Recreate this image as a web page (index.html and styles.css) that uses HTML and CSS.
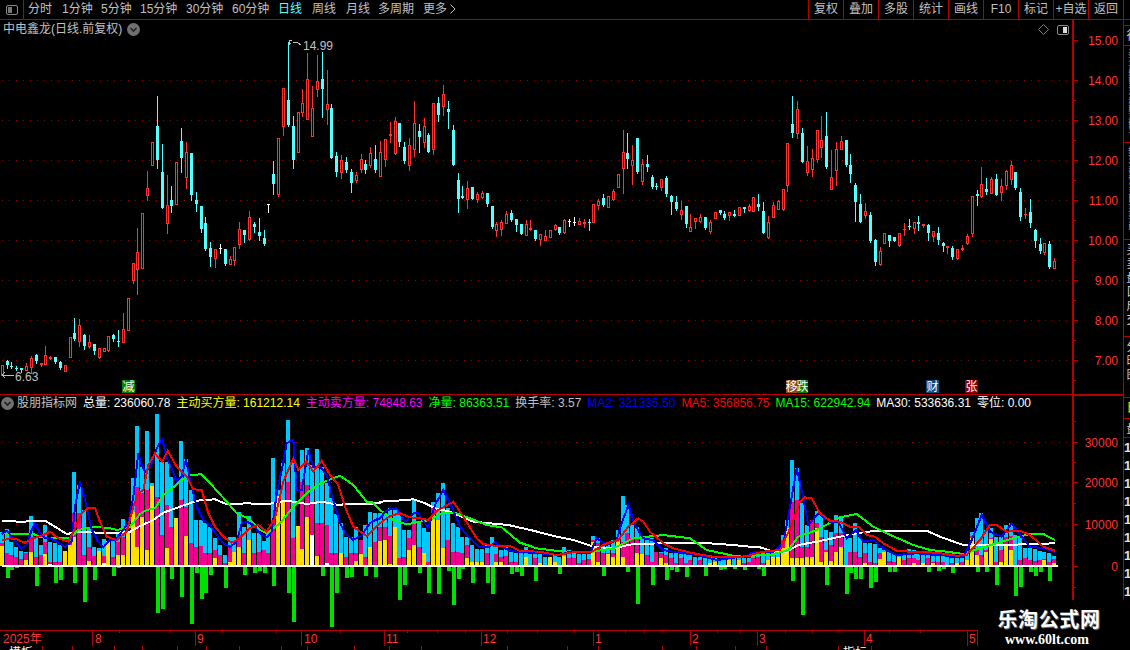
FILE: index.html
```html
<!DOCTYPE html>
<html lang="zh-CN">
<head>
  <meta charset="UTF-8" />
  <title>中电鑫龙 日线</title>
  <link rel="stylesheet" href="styles.css">
</head>
<body>

  <!-- top toolbar -->
  <div class="toolbar">
    <div class="tb-toggle"><span class="toggle toggle-left"><i></i></span></div>
    <span class="nav-item w34">分时</span>
    <span class="nav-item w39">1分钟</span>
    <span class="nav-item w39">5分钟</span>
    <span class="nav-item w46">15分钟</span>
    <span class="nav-item w46">30分钟</span>
    <span class="nav-item w46">60分钟</span>
    <span class="nav-item w34 active">日线</span>
    <span class="nav-item w34">周线</span>
    <span class="nav-item w33">月线</span>
    <span class="nav-item w45">多周期</span>
    <span class="nav-item w45">更多 <svg class="more-arrow" width="6" height="10" viewBox="0 0 6 10"><path d="M0.5 0.5L5 5L0.5 9.5" /></svg></span>
    <div class="tb-right">
      <span class="tb-cell">复权</span>
      <span class="tb-cell">叠加</span>
      <span class="tb-cell">多股</span>
      <span class="tb-cell">统计</span>
      <span class="tb-cell">画线</span>
      <span class="tb-cell">F10</span>
      <span class="tb-cell">标记</span>
      <span class="tb-cell">+自选</span>
      <span class="tb-cell">返回</span>
      <span class="tb-cell tb-last"></span>
    </div>
  </div>

  <div class="stage">
    <div class="plots">

      <!-- price panel -->
      <div class="panel">
        <svg id="priceChart" class="chart" width="1123" height="376" viewBox="0 20 1123 376"></svg>
        <div class="panel-title">
          <span>中电鑫龙(日线.前复权)</span>
          <svg class="chev" width="13" height="13" viewBox="0 0 13 13"><circle cx="6.5" cy="6.5" r="6.5" /><path d="M3.5 5L6.5 8L9.5 5" /></svg>
        </div>
        <div class="panel-tools">
          <svg class="diamond" width="11" height="11" viewBox="0 0 11 11"><path d="M5.5 0.5L10.5 5.5L5.5 10.5L0.5 5.5Z" /></svg>
          <span class="toggle toggle-right"><i></i></span>
        </div>
      </div>

      <!-- volume panel -->
      <div class="panel">
        <svg id="volChart" class="chart" width="1123" height="250" viewBox="0 396 1123 250"></svg>
        <div class="legend">
          <svg class="chev" width="13" height="13" viewBox="0 0 13 13"><circle cx="6.5" cy="6.5" r="6.5" /><path d="M3.5 5L6.5 8L9.5 5" /></svg>
          <span class="lg-name">股朋指标网</span>
          <span class="lg-white">总量: 236060.78</span>
          <span class="lg-yellow">主动买方量: 161212.14</span>
          <span class="lg-magenta">主动卖方量: 74848.63</span>
          <span class="lg-green">净量: 86363.51</span>
          <span class="lg-name">换手率: 3.57</span>
          <span class="lg-blue">MA2: 321335.50</span>
          <span class="lg-red">MA5: 356856.75</span>
          <span class="lg-green">MA15: 622942.94</span>
          <span class="lg-white">MA30: 533636.31</span>
          <span class="lg-white">零位: 0.00</span>
        </div>
      </div>

      <!-- bottom tabs, mostly cut off by the window. cells come from chart.js -->
      <div id="statusbar" class="statusbar"></div>
    </div>

    <!-- right side tabs, only their left edge is on screen -->
    <div class="side">
      <div class="side-tab h6"></div>
      <div class="side-tab h20"><span>行情</span></div>
      <div class="side-tab h97 small"><span>基本资料财务分析股东研究</span></div>
      <div class="side-tab h97 small"><span>经营分析行业对比资金流向</span></div>
      <div class="side-tab h97"><span>买卖盘口成交</span></div>
      <div class="side-tab h61"><span>分时图</span></div>
      <div class="side-tab h21 side-yellow"><span>日</span></div>
      <div class="side-tab h19"><span>盘</span></div>
      <div class="side-rows">
        <span>1</span><span>1</span><span>1</span><span>1</span><span>1</span><span>1</span><span>1</span><span>1</span><span>1</span>
      </div>
    </div>
  </div>

  <div class="watermark">
    <div class="wm-title">乐淘公式网</div>
    <div class="wm-url">www.60lt.com</div>
  </div>

  <script src="chart.js"></script>
</body>
</html>
```

FILE: styles.css
```css
* { box-sizing: border-box; }
html, body { margin: 0; height: 650px; overflow: hidden; background: #000; }
body { font-family: "Liberation Sans", "Noto Sans CJK SC", sans-serif; font-size: 12px; color: #c0c0c0; position: relative; }

/* toolbar */
.toolbar { display: flex; height: 20px; border-bottom: 1px solid #b40000; line-height: 19px; }
.tb-toggle { width: 24px; border-right: 1px solid #b40000; display: flex; align-items: center; justify-content: center; }
.nav-item { padding-left: 4px; white-space: nowrap; }
.nav-item.active { color: #54ffff; }
.w33 { width: 33px; }
.w34 { width: 34px; }
.w39 { width: 39px; }
.w45 { width: 45px; padding-left: 3px; }
.w46 { width: 46px; }
.more-arrow { fill: none; stroke: #c0c0c0; vertical-align: -1px; }
.tb-right { margin-left: auto; display: flex; }
.tb-cell { width: 35px; border-left: 1px solid #b40000; text-align: center; white-space: nowrap; }
.tb-last { width: 7px; }

.toggle { display: block; width: 12px; height: 10px; border: 1px solid #888; border-radius: 2px; position: relative; }
.toggle i { position: absolute; top: 1px; bottom: 1px; width: 4px; background: #aaa; }
.toggle-left i { left: 1px; background: #777; }
.toggle-right i { right: 1px; background: #ddd; }

/* plots */
.stage { display: flex; height: 630px; }
.plots { width: 1123px; flex: none; }
.panel { position: relative; }
.chart { display: block; shape-rendering: crispEdges; }
.chart text { font-family: "Liberation Sans", "Noto Sans CJK SC", sans-serif; font-size: 12px; }
.panel-title { position: absolute; left: 3px; top: 1px; display: flex; align-items: center; gap: 5px; line-height: 16px; }
.panel-tools { position: absolute; left: 1038px; top: 4px; display: flex; align-items: center; gap: 8px; }
.diamond { fill: none; stroke: #808080; }
.chev { flex: none; }
.chev circle { fill: #707070; }
.chev path { fill: none; stroke: #222; stroke-width: 1.6; }
.legend { position: absolute; left: 1px; top: 0; display: flex; gap: 6px; align-items: center; line-height: 14px; white-space: nowrap; }
.legend .chev { margin-right: -3px; }
.lg-name { color: #c0c0c0; }
.lg-white { color: #fff; }
.lg-yellow { color: #ffff00; }
.lg-magenta { color: #ff00ff; }
.lg-green { color: #00ff00; }
.lg-blue { color: #0000ff; }
.lg-red { color: #ff0000; }

.tick-label { fill: #ff3232; text-anchor: end; }
.date-label { fill: #ff3232; }
.price-note { fill: #c0c0c0; }
.badge-text { fill: #fff; text-anchor: middle; }

/* bottom tabs */
.statusbar { display: flex; height: 4px; overflow: hidden; font-size: 12px; line-height: 14px; color: #fff; }
.st-cell { flex: none; border-right: 1px solid #b40000; white-space: nowrap; text-align: center; }

/* right side tabs */
.side { width: 7px; height: 580px; border-left: 1px solid #b40000; overflow: hidden; }
.side-tab { border-bottom: 1px solid #b40000; overflow: hidden; }
.side-tab span { display: block; width: 14px; writing-mode: vertical-rl; text-orientation: upright; font-size: 12px; line-height: 14px; color: #d0d0d0; letter-spacing: 2px; padding-top: 3px; }
.side-tab.small span { font-size: 7px; letter-spacing: 0; }
.h6 { height: 6px; }
.h19 { height: 19px; }
.h20 { height: 20px; }
.h21 { height: 21px; }
.h61 { height: 61px; }
.h97 { height: 97px; }
.side-yellow span { color: #ffff00; }
.side-rows { display: flex; flex-direction: column; padding-top: 1px; }
.side-rows span { height: 18px; font-size: 13px; font-weight: bold; line-height: 18px; color: #e0e0e0; }

/* watermark sits over the corner of the chart */
.watermark { position: absolute; left: 978px; top: 600px; width: 152px; height: 50px; background: #000; text-align: center; color: #fff; padding-top: 8px; font-family: "Liberation Serif", "Noto Sans CJK SC", serif; font-weight: bold; }
.wm-title { font-size: 20px; line-height: 24px; letter-spacing: 0.6px; margin-left: -10px; text-shadow: 1px 1px 1px #777; }
.wm-url { font-size: 14px; line-height: 16px; margin-left: -14px; }
```

FILE: chart.js
```js
// [wickTop, bodyTop, bodyBottom, wickBottom, color] in page pixels. color: 0 red, 1 cyan, 2 white
const candles = [
[365,365,375,375,0],[360,361,365,368,1],[362,366,367,368,1],[366,368,369,370,1],[368,368,370,372,1],[363,366,370,370,0],
[356,358,367,373,0],[354,355,361,363,1],[363,363,365,366,0],[346,355,364,364,0],[356,357,359,359,0],[357,357,362,363,1],
[361,362,368,369,1],[365,365,371,371,0],[337,337,357,357,0],[318,333,339,340,1],[319,325,341,346,0],[334,335,346,349,1],
[335,342,346,348,0],[344,344,351,354,1],[348,348,357,358,0],[348,348,351,351,0],[336,336,350,351,0],[334,335,339,341,1],
[330,341,342,346,1],[313,329,342,342,0],[298,298,330,330,0],[263,263,280,283,0],[228,252,269,294,0],[213,213,268,268,0],
[171,188,195,200,0],[142,142,165,165,0],[96,126,160,168,1],[144,172,208,208,1],[175,205,223,233,0],[186,200,206,212,1],
[162,162,204,204,0],[128,141,158,172,1],[142,152,177,188,0],[153,153,195,200,1],[192,200,204,211,1],[206,206,229,232,1],
[217,223,249,250,1],[242,248,257,266,1],[249,249,258,267,0],[244,248,249,253,2],[249,249,264,265,1],[256,259,264,264,0],
[247,247,260,265,0],[222,229,244,248,0],[230,230,235,242,1],[211,217,239,240,0],[222,224,227,232,1],[218,232,236,240,1],
[230,238,244,245,1],[204,204,205,212,2],[161,174,184,194,1],[138,138,194,196,0],[88,88,126,135,0],[42,100,125,126,1],
[116,126,160,168,1],[112,112,152,152,0],[89,103,112,116,0],[53,79,119,119,0],[86,108,136,136,0],[55,81,89,96,0],
[52,79,89,117,1],[70,104,109,124,0],[104,108,158,158,1],[152,156,172,176,1],[155,160,172,178,0],[157,162,170,172,1],
[169,172,183,192,1],[172,175,180,182,0],[154,159,169,172,0],[160,164,170,173,1],[147,153,165,167,0],[145,159,170,172,1],
[141,152,176,176,0],[139,139,159,166,0],[122,134,136,142,0],[117,121,153,154,0],[123,123,142,146,1],[142,147,161,163,1],
[138,145,165,170,0],[101,123,149,156,0],[124,131,137,152,1],[118,126,142,147,0],[133,135,152,152,1],[103,103,149,154,0],
[97,103,115,121,1],[85,94,106,115,0],[101,109,112,128,1],[125,130,165,165,1],[173,180,199,212,1],[186,196,198,198,1],
[181,188,199,208,0],[187,187,199,199,1],[192,194,199,202,0],[191,193,197,198,0],[193,193,204,206,1],[206,206,227,228,1],
[222,224,230,236,0],[220,222,229,235,0],[211,214,223,223,0],[210,213,220,221,1],[219,219,225,231,1],[224,224,234,234,1],
[220,224,235,235,0],[220,228,230,230,0],[230,230,239,240,1],[234,234,239,245,0],[230,236,240,240,0],[230,230,237,237,0],
[224,225,229,230,0],[227,227,233,234,1],[219,220,232,233,0],[219,221,222,226,2],[217,222,223,225,2],[218,221,224,224,0],
[219,222,224,227,0],[219,222,223,230,1],[204,204,222,222,0],[199,201,205,209,0],[194,198,205,206,1],[196,196,207,207,0],
[189,191,199,200,0],[174,174,187,187,0],[130,152,168,193,0],[133,153,159,168,1],[145,160,165,184,0],[138,138,172,173,1],
[159,164,181,184,0],[155,164,167,171,1],[175,177,187,188,1],[183,186,187,189,1],[179,179,187,190,0],[176,178,194,196,1],
[195,196,202,214,1],[196,202,209,210,1],[201,210,214,219,0],[206,206,224,227,1],[214,227,231,231,0],[218,218,221,228,0],
[214,217,221,222,0],[217,217,228,229,1],[220,222,231,233,0],[212,212,218,218,0],[210,210,213,214,1],[211,214,218,219,1],
[212,212,215,220,0],[210,214,216,216,1],[207,207,215,215,0],[207,207,209,212,1],[204,206,210,211,0],[197,197,211,211,0],
[194,204,207,210,1],[202,211,233,233,1],[216,222,237,238,0],[202,205,217,217,0],[200,201,209,209,0],[189,189,209,210,0],
[143,143,185,191,0],[96,124,133,137,1],[101,109,133,138,0],[128,133,162,162,1],[146,161,172,175,0],[149,158,169,176,0],
[130,130,159,162,0],[116,140,147,157,0],[112,136,167,168,1],[150,177,189,189,0],[142,149,170,185,0],[136,141,149,149,0],
[140,140,165,166,1],[154,165,174,182,1],[183,185,202,221,1],[194,204,222,222,1],[203,211,215,218,0],[212,215,241,242,1],
[239,240,262,265,1],[247,251,264,265,0],[233,233,243,243,0],[235,235,241,246,1],[237,237,241,241,1],[233,233,245,246,0],
[223,229,230,235,0],[219,226,227,229,1],[222,222,228,233,0],[216,222,224,230,1],[224,224,226,227,0],[224,225,233,240,1],
[231,231,236,241,0],[227,233,240,244,1],[242,243,246,251,1],[246,246,248,253,0],[246,248,257,259,1],[249,249,258,259,0],
[245,248,250,250,0],[234,236,243,244,0],[196,196,233,236,0],[190,194,196,205,1],[167,184,196,197,0],[178,189,192,194,1],
[177,179,193,193,0],[174,179,195,195,1],[179,186,192,200,0],[170,171,185,189,0],[161,165,179,184,0],[172,172,188,189,1],
[188,192,217,220,1],[208,214,215,218,0],[199,212,223,227,1],[229,230,241,247,1],[238,244,251,253,1],[243,243,252,254,0],
[241,244,267,268,1],[258,261,268,268,0]
];

// volume bars as [cyan, magenta, yellow] tops, read off a 3x crop (468 is the baseline, so no bar)
const vols = [
[365,400,408],[358,430,468],[395,435,468],[410,440,468],[422,448,468],[425,428,450],[318,380,426],[380,440,468],[405,435,465],[345,395,432],
[395,455,468],[400,455,468],[405,455,468],[425,468,422],[390,395,405],[186,310,380],[225,310,468],[300,435,468],[358,410,453],[410,438,468],
[415,440,422],[388,438,468],[405,395,392],[390,440,468],[365,395,435],[328,380,435],[370,380,365],[205,305,305],[48,232,410],[170,250,320],
[62,240,420],[220,228,228],[12,260,468],[155,375,468],[155,285,415],[200,350,468],[325,325,325],[93,270,468],[148,290,378],[240,400,468],
[330,410,468],[330,408,468],[340,430,468],[350,430,468],[385,420,445],[405,435,468],[435,460,468],[380,410,455],[380,440,425],[305,375,410],
[350,430,468],[318,390,390],[368,430,468],[370,425,468],[392,420,468],[360,430,468],[145,330,468],[240,255,258],[160,270,270],[30,215,468],
[160,385,468],[350,348,348],[120,215,418],[115,225,322],[165,280,375],[118,340,438],[170,340,468],[220,345,468],[265,430,468],[312,430,465],
[340,430,430],[380,440,468],[380,430,468],[350,430,452],[405,390,432],[345,440,468],[305,410,410],[310,395,468],
[310,350,392],[310,350,390],[295,378,462],[293,352,350],[310,445,468],[360,440,468],[360,385,420],[270,340,405],[340,410,468],[355,430,430],
[365,455,468],[275,290,312],[250,400,330],[218,415,415],[295,390,468],[340,425,468],[350,425,468],[380,430,468],[380,405,445],[405,455,455],
[418,455,455],[418,455,455],[405,430,465],[382,465,468],[405,432,455],[420,440,455],[405,438,468],[425,455,468],[430,455,468],[430,465,468],
[410,440,440],[432,465,468],[432,445,465],[428,460,458],[440,465,468],[440,455,440],[435,460,455],[440,465,468],[410,437,437],[420,445,468],
[430,445,468],[432,460,468],[430,450,468],[430,448,468],[378,390,395],[385,400,455],[405,430,468],[400,430,432],[390,430,440],[360,395,395],
[258,395,440],[285,370,468],[345,385,468],[350,380,430],[385,455,432],[385,435,468],[385,455,468],[425,425,465],[425,430,445],[415,435,460],
[430,445,468],[425,460,468],[430,445,468],[430,460,468],[435,450,468],[440,465,468],[440,450,468],[445,465,468],[440,458,458],[445,455,455],
[450,465,468],[450,465,468],[435,450,450],[445,465,468],[445,450,450],[445,458,468],[445,455,468],[425,445,468],[422,440,468],[425,460,468],
[430,450,450],[420,440,440],[420,440,440],[375,390,415],[330,370,355],[150,275,445],[175,270,445],[280,410,445],[345,410,440],[345,330,440],
[302,340,355],[315,380,455],[360,420,425],[365,405,452],[315,370,425],[320,370,410],[380,465,468],[385,425,465],[340,425,468],[380,440,468],
[400,430,460],[400,455,468],[403,460,468],[415,430,448],[420,425,425],[425,452,468],[428,455,468],[435,440,440],[430,450,468],[418,445,468],
[420,445,460],[425,450,468],[432,460,460],[432,445,468],[432,455,460],[430,455,468],[432,455,468],[438,465,468],[445,460,468],[445,458,458],
[440,455,468],[430,450,450],[365,378,385],[325,415,435],[310,435,468],[360,420,425],[355,385,388],[382,455,468],[380,420,455],[345,380,408],
[338,378,420],[375,465,468],[385,450,468],[415,445,468],[415,450,468],[418,452,468],[422,450,468],[425,448,450],[430,455,468],[438,448,458]
];
const whites = { 8: 465, 10: 462, 21: 460, 64: 375, 67: 460 };

// net volume drops below the zero line, index -> bottom (same 3x scale)
const greens = {
1:503,2:480,3:475,4:472,7:527,11:518,12:510,15:518,17:575,19:510,23:497,24:473,32:608,33:596,35:506,37:560,39:641,40:488,41:566,42:548,43:495,46:533,
50:494,52:490,53:483,54:490,56:527,59:548,60:635,66:497,68:650,69:548,71:505,72:500,75:497,77:502,
82:570,83:524,86:488,88:548,90:551,92:482,93:585,94:506,95:476,97:518,100:518,101:551,105:491,106:486,107:497,110:512,115:491,124:497,129:486,131:581,
134:524,137:509,138:480,139:485,141:500,145:497,148:480,149:476,151:476,153:480,156:476,
157:497,163:512,165:614,170:524,174:551,175:488,176:506,177:506,179:533,180:515,183:485,184:485,191:485,193:482,194:476,196:488,201:485,203:485,205:524,
209:557,210:530,212:485,213:497,214:485,216:512
};

// moving averages, [x,y,x,y...] on the same crops: crop left edges 0, 380, 750
const lines = {
  '#ffffff': [
    [0,[5,333,65,335,135,332,165,350,200,372,240,365,330,370,390,365,420,348,460,330,490,308,540,290,590,272,645,268,680,283,740,280,800,283,860,272,920,282,965,275,1010,284,1140,280]],
    [380,[0,275,50,272,100,268,135,280,165,295,210,305,280,335,385,345,460,362,530,380,580,390,640,410,700,415,760,402,850,400,960,398,1060,405,1110,410]],
    [750,[0,410,30,412,70,425,110,425,145,405,200,395,270,380,330,368,380,362,530,362,570,380,640,405,760,405,915,400]]
  ],
  '#00ff00': [
    [0,[5,370,50,372,100,372,120,382,210,385,235,360,285,350,330,355,350,360,390,350,420,312,440,300,465,295,490,255,520,232,545,210,570,195,605,193,640,230,680,275,710,310,745,325,780,360,800,370,840,340,880,290,925,245,965,218,1020,197,1060,225,1100,275,1115,275,1140,300]],
    [380,[0,300,40,330,80,343,120,335,150,330,190,308,225,308,270,325,320,345,365,352,420,398,470,415,550,425,620,428,700,415,760,385,850,375,930,385,980,420,1060,437,1110,437]],
    [750,[0,437,60,435,115,420,145,380,200,360,270,322,320,312,370,350,410,370,490,405,540,420,590,425,640,432,690,415,740,400,790,385,840,372,880,372,915,390]]
  ],
  '#0000ff': [
    [0,[5,372,20,362,35,380,50,400,65,415,80,405,95,360,105,340,120,370,135,385,150,385,170,395,195,410,215,395,225,290,240,215,255,270,275,360,295,395,310,412,330,390,345,390,365,365,385,340,400,260,415,130,425,165,435,185,450,170,470,115,487,88,500,145,515,175,530,215,545,200,558,148,570,210,590,290,610,330,630,345,650,375,670,400,690,410,710,395,725,340,740,335,760,345,780,370,800,382,815,365,830,250,845,180,860,100,880,88,890,240,905,240,925,120,940,170,960,170,980,195,1000,270,1020,340,1040,375,1060,390,1085,375,1110,340,1125,330,1140,325]],
    [380,[0,325,20,300,50,295,75,335,100,310,115,310,145,355,165,285,190,240,215,290,240,350,265,380,295,410,325,410,345,398,380,418,410,425,440,425,480,430,540,435,570,425,630,430,650,385,680,405,710,390,725,340,745,285,765,345,790,385,820,390,850,420,880,425,950,435,1010,450,1050,445,1110,435]],
    [750,[0,430,20,425,70,425,100,400,120,290,140,175,155,240,175,345,205,310,240,335,265,335,290,385,318,360,340,395,370,390,400,415,440,435,500,430,560,435,640,440,665,390,695,315,720,365,755,380,785,340,810,375,840,410,880,415,915,425]]
  ],
  '#ff0000': [
    [0,[5,392,30,385,50,388,75,398,100,385,130,375,150,365,175,385,205,395,225,355,245,310,265,293,285,293,300,335,320,380,350,390,380,365,400,290,415,250,430,240,445,165,465,130,487,155,503,122,530,170,560,200,580,238,605,240,625,310,645,350,670,380,695,398,720,385,750,355,775,345,800,365,825,325,850,215,880,145,895,180,920,155,940,185,965,152,990,195,1015,225,1035,290,1060,350,1085,368,1100,378,1120,360,1140,340]],
    [380,[0,340,30,318,60,310,90,322,120,325,145,330,175,300,220,275,250,320,290,385,310,402,350,408,390,408,420,423,480,425,530,435,590,425,635,425,680,400,715,390,745,350,775,325,790,335,810,365,850,400,880,415,940,430,1000,440,1060,442,1110,438]],
    [750,[0,435,40,425,90,420,125,345,150,275,165,262,185,265,210,310,240,332,270,335,300,350,325,350,350,375,375,380,400,400,440,422,480,425,560,428,620,437,650,435,690,390,720,345,740,345,770,365,810,362,840,375,880,410,915,422]]
  ]
};

// bottom tab dividers (x) and the few tab labels that peek in
const tabEdges = [43,73,115,143,178,207,240,282,308,355,390,422,508,568,599,663,697,736,767,839,872];
const tabText = { 0: '模板', 20: '指标' };

const RED = '#ff3232', CYAN = '#54ffff', AXIS = '#b40000', DOT = '#a00000';

function col(i){ return Math.floor(2.2 + 4.85 * i); }
function rect(x,y,w,h,c){ return `<rect x="${x}" y="${y}" width="${w}" height="${h}" fill="${c}"/>`; }
function dots(y){ return `<line x1="2" x2="1071" y1="${y+.5}" y2="${y+.5}" stroke="${DOT}" stroke-dasharray="1 6"/>`; }
function label(x,y,t,cls){ return `<text x="${x}" y="${y}" class="${cls}">${t}</text>`; }

function drawPrice(){
  let s = '';
  for(let p=7; p<=14; p++) s += dots(40 + (15-p)*40);
  // candles
  candles.forEach((k,i)=>{
    const x = col(i), [wt,bt,bb,wb,c] = k;
    const color = c===0 ? RED : c===1 ? CYAN : '#fff';
    s += rect(x, wt, 1, wb-wt+1, color);
    if(c===0 && bb-bt>2){
      s += rect(x-1, bt, 3, bb-bt+1, color) + rect(x, bt+1, 1, bb-bt-1, '#000');
    } else {
      s += rect(x-1, bt, 3, Math.max(bb-bt,1), color);
    }
  });
  // high and low notes
  s += `<path d="M289 45V40H292M289 42L291 44M293 43L297 42L301 45" fill="none" stroke="#c0c0c0"/>`;
  s += label(303, 50, '14.99', 'price-note');
  s += `<path d="M2 375H14M2 375L5 372M2 375L5 378" fill="none" stroke="#c0c0c0"/>`;
  s += label(15, 381, '6.63', 'price-note');
  // signal badges
  [[122,13,'#008000','减'],[786,11,'#8b4a10','移'],[797,11,'#008000','跌'],[926,13,'#0a4a80','财'],[965,13,'#8b0000','张']].forEach(b=>{
    s += rect(b[0],380,b[1],13,b[2]);
    s += `<text x="${b[0]+b[1]/2}" y="391" class="badge-text">${b[3]}</text>`;
  });
  // axis
  s += rect(1072,20,2,376,AXIS);
  s += rect(0,394,1072,1,AXIS) + rect(1074,394,49,2,AXIS);
  for(let p=7; p<=15; p++){
    const y = 40 + (15-p)*40;
    s += rect(1074,y,4,1,AXIS);
    s += label(1118, y+5, p.toFixed(2), 'tick-label');
    if(p<15) s += rect(1074,y+20,2,1,AXIS);
  }
  s += rect(1074,380,2,1,AXIS);
  document.getElementById('priceChart').innerHTML = s;
}

function drawVol(){
  const base = 566, top = y => Math.round(410 + y/3);
  let s = '';
  [442,482,524].forEach(y=>{ s += dots(y); });
  s += `<line x1="1058" x2="1071" y1="566.5" y2="566.5" stroke="${DOT}" stroke-dasharray="1 6"/>`;
  vols.forEach((v,i)=>{
    const x = col(i)-2;
    v.forEach((y,n)=>{
      const t = top(y);
      if(y<468) s += rect(x,t,4,base-t,['#00c8ff','#f0008c','#ffe000'][n]);
    });
    if(whites[i]){ const t=top(whites[i]); s += rect(x,t,4,base-t,'#fff'); }
  });
  Object.keys(greens).forEach(i=>{
    s += rect(col(+i)-1,567,4,top(greens[i])-567,'#00e000');
  });
  s += rect(2,565,1056,2,'#fff');
  // moving averages, no antialias to keep the stepped look
  Object.keys(lines).forEach(c=>{
    const pts = [];
    lines[c].forEach(seg=>{
      for(let j=0;j<seg[1].length;j+=2) pts.push((seg[0]+seg[1][j]/3).toFixed(1)+','+(410+seg[1][j+1]/3).toFixed(1));
    });
    s += `<polyline points="${pts.join(' ')}" fill="none" stroke="${c}" stroke-width="2"/>`;
  });
  // axis
  s += rect(1072,396,2,204,AXIS);
  [[442,'30000'],[482,'20000'],[524,'10000'],[566,'0']].forEach(t=>{
    s += rect(1074,t[0],4,1,AXIS);
    s += label(1118,t[0]+5,t[1],'tick-label');
  });
  [462,503,545,587].forEach(y=>{ s += rect(1074,y,2,1,AXIS); });
  s += rect(1074,421,2,1,AXIS);
  // date bar
  s += rect(0,630,978,1,AXIS) + rect(0,646,978,1,AXIS);
  [[0,'2025年',3],[92,'8',95],[195,'9',197],[301,'10',304],[384,'11',386],[481,'12',483],[593,'1',595],[690,'2',692],[757,'3',759],[864,'4',866],[967,'5',969]].forEach(d=>{
    if(d[0]) s += rect(d[0],631,1,15,AXIS);
    s += label(d[2],643,d[1],'date-label');
  });
  s += rect(977,631,1,15,AXIS);
  [119,170,222,276,340,407,437,465,507,537,574,625,644,662,717,740,785,812,838,889,920].forEach(x=>{ s += rect(x,631,1,2,AXIS); });
  document.getElementById('volChart').innerHTML = s;
}

function drawTabs(){
  let s = '', left = 0;
  tabEdges.forEach((x,i)=>{
    s += `<span class="st-cell" style="width:${x-left}px">${tabText[i]||''}</span>`;
    left = x;
  });
  document.getElementById('statusbar').innerHTML = s;
}

drawPrice();
drawVol();
drawTabs();
```
